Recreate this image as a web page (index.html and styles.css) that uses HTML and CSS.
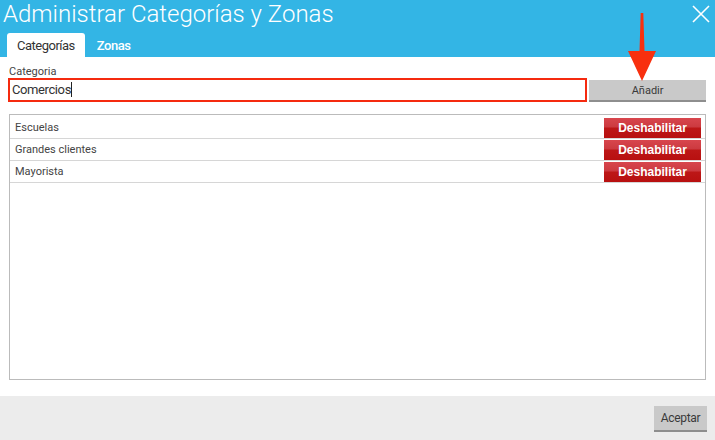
FILE: index.html
```html
<!DOCTYPE html>
<html lang="es">
<head>
  <meta charset="UTF-8" />
  <title>Administrar Categorías y Zonas</title>
  <link rel="stylesheet" href="styles.css">
</head>
<body>

  <div class="dialog">
    <div class="header">
      <div class="title-row">
        <h1>Administrar Categorías y Zonas</h1>
        <svg class="close" width="18" height="18" viewBox="0 0 18 18">
          <path d="M1 1 L17 17 M17 1 L1 17" stroke="#fff" stroke-width="1.6" fill="none"/>
        </svg>
      </div>
      <div class="tabs">
        <div class="tab active">Categorías</div>
        <div class="tab">Zonas</div>
      </div>
    </div>

    <div class="content">
      <label class="field-label">Categoria</label>
      <div class="add-row">
        <div class="input">Comercios<span class="caret"></span></div>
        <button class="btn-gray add-btn">Añadir</button>
      </div>

      <div class="list">
        <div class="row"><span>Escuelas</span><button class="btn-red">Deshabilitar</button></div>
        <div class="row"><span>Grandes clientes</span><button class="btn-red">Deshabilitar</button></div>
        <div class="row"><span>Mayorista</span><button class="btn-red">Deshabilitar</button></div>
      </div>
    </div>

    <div class="footer">
      <button class="btn-gray ok-btn">Aceptar</button>
    </div>

    <!-- flecha de anotación -->
    <svg class="arrow" width="34" height="72" viewBox="0 0 34 72">
      <path d="M15.7 0 L18.3 0 L19.5 38 L31 38 L17 68 L3 38 L14.5 38 Z" fill="#f8300f"/>
    </svg>
  </div>

</body>
</html>
```

FILE: styles.css
```css
body {
  margin: 0;
  font-family: Roboto, "Liberation Sans", sans-serif;
  background: #fff;
}
.dialog {
  position: relative;
  width: 715px;
  height: 440px;
  display: flex;
  flex-direction: column;
}
.header {
  background: #33b5e5;
  height: 57px;
  display: flex;
  flex-direction: column;
  justify-content: space-between;
}
.title-row {
  display: flex;
  justify-content: space-between;
  align-items: flex-start;
}
h1 {
  margin: 0 0 0 3px;
  font-size: 24px;
  font-weight: 300;
  line-height: 28px;
  color: #fff;
}
.close {
  margin: 5px 5px 0 0;
}
.tabs {
  display: flex;
  gap: 2px;
  margin-left: 7px;
}
.tab {
  height: 24px;
  line-height: 25px;
  padding: 0 10px;
  font-size: 13px;
  letter-spacing: -0.5px;
  color: #fff;
  font-weight: 500;
}
.tab.active {
  background: #fff;
  color: #333;
  font-weight: 400;
  border-radius: 3px 3px 0 0;
}
.content {
  flex: 1;
  padding: 9px 9px 16px 8px;
  display: flex;
  flex-direction: column;
}
.field-label {
  font-size: 11px;
  color: #444;
  line-height: 12px;
  margin-left: 1px;
}
.add-row {
  display: flex;
  align-items: flex-start;
  gap: 2px;
}
.input {
  width: 574px;
  height: 20px;
  border: 2px solid #f52a0f;
  font-size: 13px;
  letter-spacing: -0.4px;
  color: #333;
  line-height: 20px;
  padding-left: 2px;
}
.caret {
  display: inline-block;
  width: 1px;
  height: 15px;
  background: #222;
  vertical-align: -3px;
}
.btn-gray {
  background: #c9c9c9;
  border: none;
  border-bottom: 2px solid #8e8e8e;
  font-family: Roboto, "Liberation Sans", sans-serif;
  font-size: 11px;
  color: #3a3a3a;
  cursor: pointer;
  padding: 0;
}
.add-btn {
  width: 117px;
  height: 22px;
  margin-top: 2px;
}
.list {
  margin: 12px 0 0 1px;
  flex: 1;
  border: 1px solid #bbb;
  padding-top: 2px;
}
.row {
  display: flex;
  justify-content: space-between;
  align-items: center;
  height: 21px;
  border-bottom: 1px solid #d6d6d6;
  padding-left: 5px;
  font-size: 11px;
  color: #444;
}
.btn-red {
  width: 97px;
  height: 20px;
  margin-right: 4px;
  border: none;
  padding: 0;
  background: linear-gradient(#d8464d 0%, #cc3a40 45%, #bd1717 50%, #b81010 100%);
  color: #fff;
  font-family: "Liberation Sans", Arial, sans-serif;
  font-weight: bold;
  font-size: 12px;
  cursor: pointer;
}
.footer {
  height: 44px;
  background: #ececec;
  display: flex;
  justify-content: flex-end;
  align-items: flex-start;
}
.ok-btn {
  width: 53px;
  height: 26px;
  margin: 10px 8px 0 0;
  font-size: 12px;
  letter-spacing: -0.3px;
}
.arrow {
  position: absolute;
  left: 625px;
  top: 13px;
}
```
